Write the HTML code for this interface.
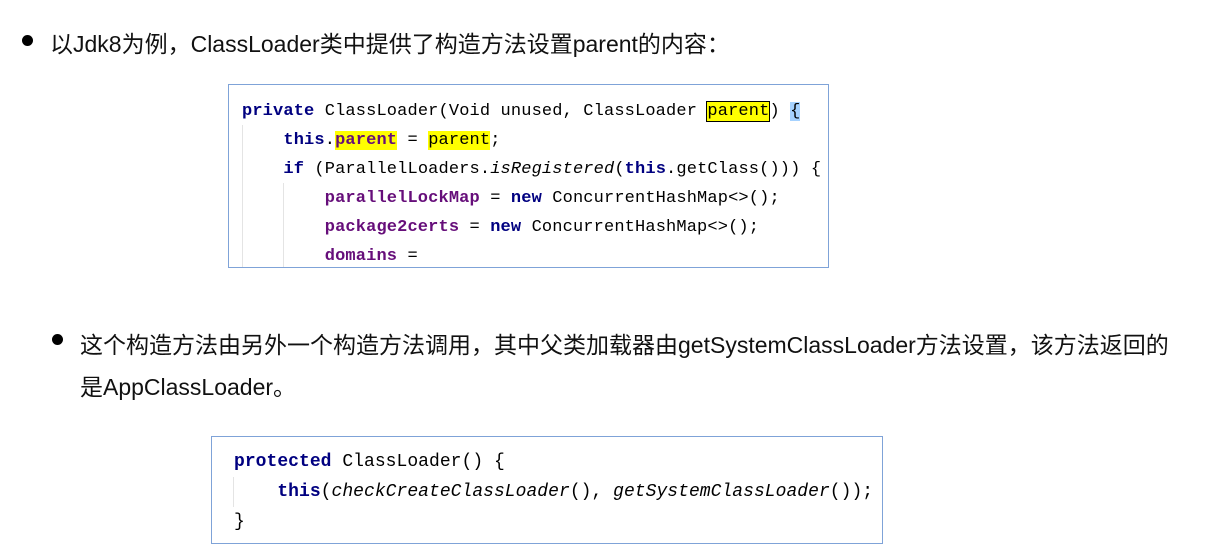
<!DOCTYPE html>
<html><head><meta charset="utf-8"><style>
body{margin:0;width:1221px;height:555px;background:#fff;position:relative;overflow:hidden;font-family:"Liberation Sans","Noto Sans CJK SC",sans-serif;color:#111}
.t{position:absolute;font-size:23px;white-space:nowrap}
.dot{position:absolute;width:11px;height:11px;border-radius:50%;background:#000}
.box{position:absolute;border:1.5px solid #7fa3d8;background:#fff}
.c{position:absolute;font-family:"Liberation Mono",monospace;white-space:pre;color:#000}
.k{color:#000080;font-weight:bold}
.f{color:#660e7a;font-weight:bold}
.i{font-style:italic}
.y{background:#ffff00}
.g{position:absolute;width:1px;background:#e4e4e4}
</style></head><body>
<div class="dot" style="left:22px;top:35px"></div>
<div class="t" style="left:50px;top:25px">以Jdk8为例，ClassLoader类中提供了构造方法设置parent的内容：</div>
<div class="box" style="left:228px;top:84px;width:599px;height:182px">
<div class="g" style="left:13px;top:40px;height:142px"></div>
<div class="g" style="left:54px;top:98px;height:84px"></div>
<div class="c" style="left:13px;top:12px;font-size:17px;letter-spacing:0.14px;line-height:29px"><span class="k">private</span> ClassLoader(Void unused, ClassLoader <span class="y" style="outline:1px solid #000">parent</span>) <span style="background:#a6d2ff">{</span>
    <span class="k">this</span>.<span class="f y">parent</span> = <span class="y">parent</span>;
    <span class="k">if</span> (ParallelLoaders.<span class="i">isRegistered</span>(<span class="k">this</span>.getClass())) {
        <span class="f">parallelLockMap</span> = <span class="k">new</span> ConcurrentHashMap&lt;&gt;();
        <span class="f">package2certs</span> = <span class="k">new</span> ConcurrentHashMap&lt;&gt;();
        <span class="f">domains</span> =</div>
</div>
<div class="dot" style="left:52px;top:334px"></div>
<div class="t" style="left:80px;top:324px;line-height:42px">这个构造方法由另外一个构造方法调用，其中父类加载器由getSystemClassLoader方法设置，该方法返回的<br>是AppClassLoader。</div>
<div class="box" style="left:211px;top:436px;width:670px;height:106px">
<div class="g" style="left:21px;top:40px;height:30px"></div>
<div class="c" style="left:22px;top:10px;font-size:18px;letter-spacing:0.03px;line-height:30px"><span class="k">protected</span> ClassLoader() {
    <span class="k">this</span>(<span class="i">checkCreateClassLoader</span>(), <span class="i">getSystemClassLoader</span>());
}</div>
</div>
</body></html>
